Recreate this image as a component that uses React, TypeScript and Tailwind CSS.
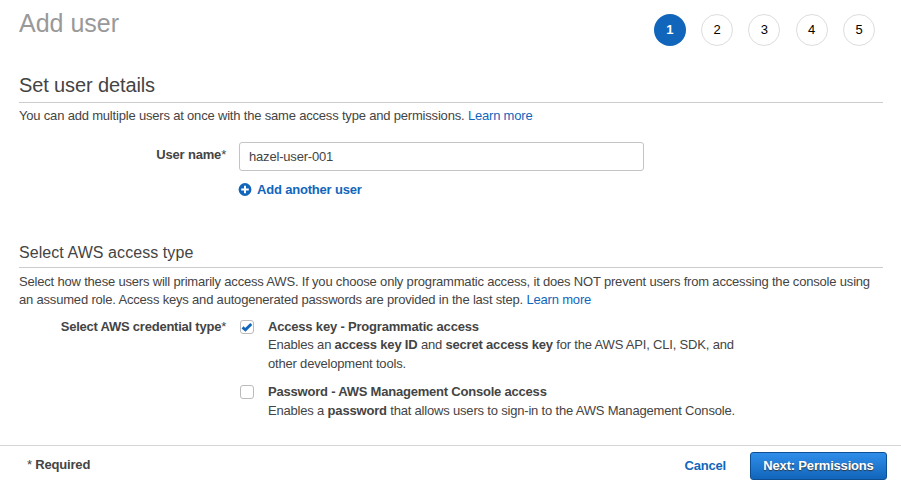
import React from "react";

const steps = [1, 2, 3, 4, 5];

function Steps() {
  return (
    <ol className="mt-[14px] mr-[8px] flex gap-[15.3px] tracking-normal text-black">
      {steps.map((n) => (
        <li
          key={n}
          className={
            n === 1
              ? "flex h-8 w-8 items-center justify-center rounded-full bg-[#1166bb] font-bold text-white"
              : "flex h-8 w-8 items-center justify-center rounded-full border border-[#dddddd]"
          }
        >
          {n}
        </li>
      ))}
    </ol>
  );
}

function Checkbox({ checked }: { checked?: boolean }) {
  return (
    <span className="mt-[2px] flex h-[14px] w-[14px] shrink-0 items-center justify-center rounded-[3px] border border-[#bbbbbb] bg-white">
      {checked && (
        <svg width="12" height="12" viewBox="0 0 12 12" fill="none">
          <path d="M1.5 6.4 4.4 8.8 10.3 2.9" stroke="#1166bb" strokeWidth="2.8" />
        </svg>
      )}
    </span>
  );
}

export default function App() {
  return (
    <div className="flex h-[483px] w-[901px] flex-col overflow-hidden bg-white font-['Liberation_Sans',Arial,sans-serif] text-[13px] leading-[18.4px] tracking-[-0.187px] text-[#444444]">
      <main className="h-[445px] pr-[18px] pl-[19px]">
        <header className="flex h-[71px] justify-between">
          <h1 className="mt-[8px] text-[25px] leading-[30px] tracking-normal text-[#999999]">Add user</h1>
          <Steps />
        </header>
        <h2 className="h-[32px] border-b border-[#cccccc] text-[20px] leading-[28px] tracking-[-0.12px]">Set user details</h2>
        <p className="mt-[4px] whitespace-nowrap">
          You can add multiple users at once with the same access type and permissions.{" "}
          <a className="text-[#1166bb]">Learn more</a>
        </p>
        <div className="mt-[17px] flex h-[29px]">
          <label className="mt-[4px] w-[207px] text-right font-bold">
            User name<span className="font-normal">*</span>
          </label>
          <div className="ml-[13px] flex h-[29px] w-[405px] items-center rounded-[3px] border border-[#c4c4c4] pl-[9px]">
            hazel-user-001
          </div>
        </div>
        <div className="mt-[10px] ml-[219px] flex h-[18px] items-center gap-[5px] font-bold text-[#1166bb]">
          <svg width="14" height="14" viewBox="0 0 14 14">
            <circle cx="7" cy="6.5" r="6.4" fill="#1166bb" />
            <path d="M7 2.8v7.4M3.2 6.5h7.6" stroke="white" strokeWidth="2" />
          </svg>
          <span>Add another user</span>
        </div>
        <h3 className="mt-[41.6px] h-[27.4px] border-b border-[#cccccc] text-[16px] leading-[24px] tracking-[0.07px]">Select AWS access type</h3>
        <p className="mt-[5px] leading-[18px] whitespace-nowrap">
          Select how these users will primarily access AWS. If you choose only programmatic access, it does NOT prevent users from accessing the console using
          <br />
          an assumed role. Access keys and autogenerated passwords are provided in the last step.{" "}
          <a className="text-[#1166bb]">Learn more</a>
        </p>
        <div className="mt-[8.6px] flex">
          <div className="w-[207px] text-right font-bold tracking-[-0.23px]">
            Select AWS credential type<span className="font-normal">*</span>
          </div>
          <div className="ml-[14px] flex flex-col gap-[10px] whitespace-nowrap">
            <div className="flex gap-[14px]">
              <Checkbox checked />
              <div>
                <b>Access key - Programmatic access</b>
                <br />
                Enables an <b>access key ID</b> and <b>secret access key</b> for the AWS API, CLI, SDK, and
                <br />
                other development tools.
              </div>
            </div>
            <div className="flex gap-[14px]">
              <Checkbox />
              <div>
                <b className="tracking-[-0.21px]">Password - AWS Management Console access</b>
                <br />
                Enables a <b>password</b> that allows users to sign-in to the AWS Management Console.
              </div>
            </div>
          </div>
        </div>
      </main>
      <footer className="flex h-[38px] border-t border-[#d5d5d5] pr-[14px] pl-[27px] font-bold">
        <span className="mt-[10px]">
          <span className="font-normal">*</span> Required
        </span>
        <a className="mt-[11px] ml-auto text-[#1166bb]">Cancel</a>
        <button className="mt-[6px] ml-[24px] h-[28px] w-[137px] rounded-[3px] border border-[#0d4f92] bg-linear-to-b from-[#2f8eea] to-[#1166bb] text-white [text-shadow:0_1px_1px_#333]">
          Next: Permissions
        </button>
      </footer>
    </div>
  );
}
